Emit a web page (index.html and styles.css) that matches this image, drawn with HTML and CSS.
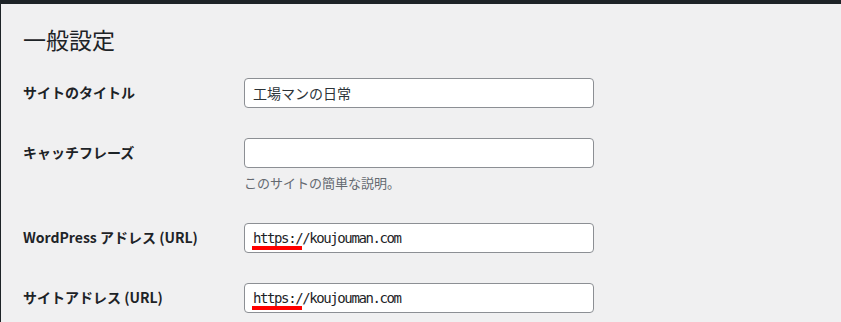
FILE: index.html
```html
<!DOCTYPE html>
<html lang="ja">
<head>
  <meta charset="UTF-8" />
  <meta name="viewport" content="width=device-width, initial-scale=1.0" />
  <title>一般設定</title>
  <link rel="stylesheet" href="styles.css">
</head>
<body>
  <div class="wrap">
    <h1>一般設定</h1>

    <div class="form-table">
      <div class="row">
        <div class="label">サイトのタイトル</div>
        <div class="field">
          <input type="text" class="regular-text" value="工場マンの日常" readonly />
        </div>
      </div>

      <div class="row">
        <div class="label">キャッチフレーズ</div>
        <div class="field">
          <input type="text" class="regular-text" value="" readonly />
          <p class="description">このサイトの簡単な説明。</p>
        </div>
      </div>

      <div class="row">
        <div class="label">WordPress アドレス (URL)</div>
        <div class="field">
          <div class="url-box">
            <input type="text" class="regular-text code" value="https://koujouman.com" readonly />
            <span class="mark"></span>
          </div>
        </div>
      </div>

      <div class="row">
        <div class="label">サイトアドレス (URL)</div>
        <div class="field">
          <div class="url-box">
            <input type="text" class="regular-text code" value="https://koujouman.com" readonly />
            <span class="mark"></span>
          </div>
          <p class="description">サイトのホームページを WordPress のインストールディレクトリとは異なる場所にしたい場合は、<a href="#">ここにアドレスを入力</a>してください。</p>
        </div>
      </div>
    </div>
  </div>
</body>
</html>
```

FILE: styles.css
```css
html, body {
  margin: 0;
  padding: 0;
  overflow: hidden;
}

body {
  background-color: #f0f0f1;
  border-top: 4px solid #1d2327;
  border-left: 1px solid #1d2327;
  font-family: "Noto Sans CJK JP", "Noto Sans", sans-serif;
  color: #1d2327;
  min-height: 318px;
  box-sizing: border-box;
}

.wrap {
  padding-left: 22px;
}

h1 {
  font-size: 23px;
  font-weight: 400;
  line-height: 30px;
  margin: 0 0 9px 0;
  padding-top: 20px;
}

.row {
  display: grid;
  grid-template-columns: 221px 1fr;
}

.label {
  padding: 20px 0;
  font-size: 14px;
  font-weight: 700;
  line-height: 18px;
}

.field {
  padding: 15px 0;
}

.regular-text {
  display: block;
  width: 350px;
  height: 30px;
  box-sizing: border-box;
  margin: 0;
  padding: 0 8px;
  border: 1px solid #8c8f94;
  border-radius: 4px;
  background: white;
  color: #2c3338;
  font-family: "Noto Sans CJK JP", "Noto Sans", sans-serif;
  font-size: 14px;
  outline: none;
}

.code {
  font-family: "DejaVu Sans Mono", monospace;
  font-size: 14px;
  letter-spacing: -1.4px;
  color: #1d2327;
}

.url-box {
  position: relative;
  width: 350px;
}

.mark {
  position: absolute;
  left: 8px;
  top: 23px;
  width: 50px;
  height: 4px;
  background-color: #ff0000;
}

.description {
  margin: 4px 0 0 0;
  font-size: 13px;
  line-height: 21px;
  color: #646970;
}

.description a {
  color: #2271b1;
}
```
